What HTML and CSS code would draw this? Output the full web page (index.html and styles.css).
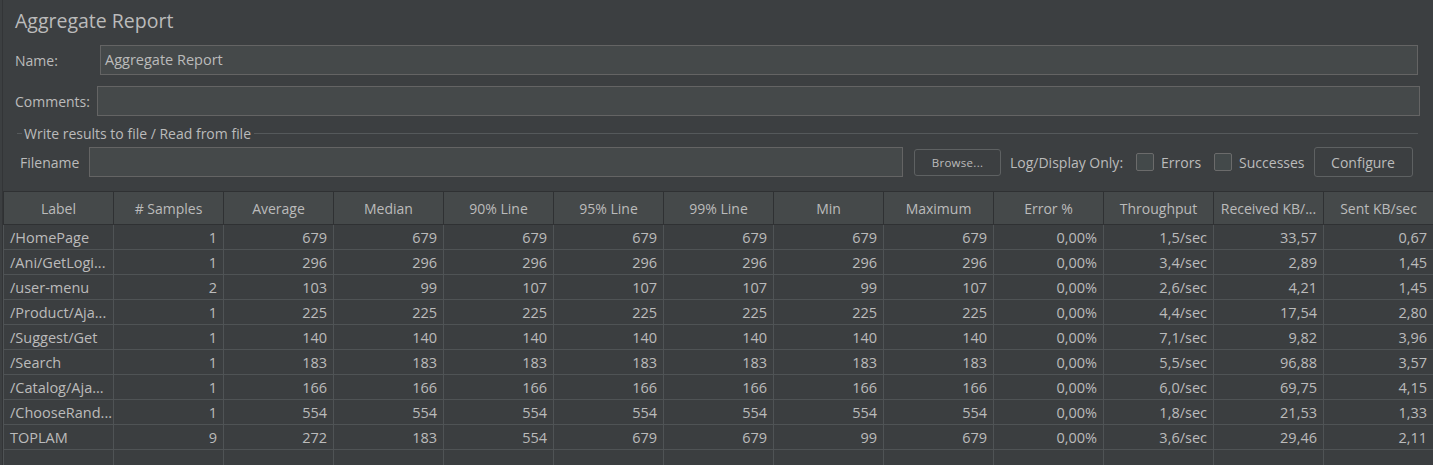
FILE: index.html
```html
<!DOCTYPE html>
<html>
<head>
<meta charset="utf-8">
<link rel="stylesheet" href="styles.css">
</head>
<body>
<div class="panel">
  <div class="form">
    <div class="title">Aggregate Report</div>
    <div class="row name-row">
      <span class="lbl">Name:</span>
      <div class="field name-field">Aggregate Report</div>
    </div>
    <div class="row comments-row">
      <span class="lbl">Comments:</span>
      <div class="field comments-field"></div>
    </div>
    <div class="group-head">
      <span class="dash"></span>
      <span class="group-title">Write results to file / Read from file</span>
      <span class="rule"></span>
    </div>
    <div class="file-row">
      <span class="lbl">Filename</span>
      <div class="field file-field"></div>
      <button class="btn browse">Browse...</button>
      <span class="lbl log">Log/Display Only:</span>
      <span class="check"></span><span class="lbl chk-lbl">Errors</span>
      <span class="check"></span><span class="lbl chk-lbl">Successes</span>
      <button class="btn configure">Configure</button>
    </div>
  </div>
  <table class="grid">
    <thead>
      <tr>
        <th>Label</th><th># Samples</th><th>Average</th><th>Median</th><th>90% Line</th><th>95% Line</th><th>99% Line</th><th>Min</th><th>Maximum</th><th>Error %</th><th>Throughput</th><th>Received KB/...</th><th>Sent KB/sec</th>
      </tr>
    </thead>
    <tbody>
      <tr><td class="l">/HomePage</td><td>1</td><td>679</td><td>679</td><td>679</td><td>679</td><td>679</td><td>679</td><td>679</td><td>0,00%</td><td>1,5/sec</td><td>33,57</td><td>0,67</td></tr>
      <tr><td class="l">/Ani/GetLogi...</td><td>1</td><td>296</td><td>296</td><td>296</td><td>296</td><td>296</td><td>296</td><td>296</td><td>0,00%</td><td>3,4/sec</td><td>2,89</td><td>1,45</td></tr>
      <tr><td class="l">/user-menu</td><td>2</td><td>103</td><td>99</td><td>107</td><td>107</td><td>107</td><td>99</td><td>107</td><td>0,00%</td><td>2,6/sec</td><td>4,21</td><td>1,45</td></tr>
      <tr><td class="l">/Product/Aja...</td><td>1</td><td>225</td><td>225</td><td>225</td><td>225</td><td>225</td><td>225</td><td>225</td><td>0,00%</td><td>4,4/sec</td><td>17,54</td><td>2,80</td></tr>
      <tr><td class="l">/Suggest/Get</td><td>1</td><td>140</td><td>140</td><td>140</td><td>140</td><td>140</td><td>140</td><td>140</td><td>0,00%</td><td>7,1/sec</td><td>9,82</td><td>3,96</td></tr>
      <tr><td class="l">/Search</td><td>1</td><td>183</td><td>183</td><td>183</td><td>183</td><td>183</td><td>183</td><td>183</td><td>0,00%</td><td>5,5/sec</td><td>96,88</td><td>3,57</td></tr>
      <tr><td class="l">/Catalog/Aja...</td><td>1</td><td>166</td><td>166</td><td>166</td><td>166</td><td>166</td><td>166</td><td>166</td><td>0,00%</td><td>6,0/sec</td><td>69,75</td><td>4,15</td></tr>
      <tr><td class="l">/ChooseRand...</td><td>1</td><td>554</td><td>554</td><td>554</td><td>554</td><td>554</td><td>554</td><td>554</td><td>0,00%</td><td>1,8/sec</td><td>21,53</td><td>1,33</td></tr>
      <tr><td class="l">TOPLAM</td><td>9</td><td>272</td><td>183</td><td>554</td><td>679</td><td>679</td><td>99</td><td>679</td><td>0,00%</td><td>3,6/sec</td><td>29,46</td><td>2,11</td></tr>
      <tr class="empty"><td></td><td></td><td></td><td></td><td></td><td></td><td></td><td></td><td></td><td></td><td></td><td></td><td></td></tr>
    </tbody>
  </table>
</div>
</body>
</html>
```

FILE: styles.css
```css
html, body {
  margin: 0;
  padding: 0;
  background: #3c3f41;
  height: 100%;
  overflow: hidden;
}
body {
  font-family: "Open Sans", "Noto Sans", sans-serif;
  color: #bbbbbb;
  font-size: 14px;
}
.panel {
  margin-left: 2px;
  border-left: 1px solid #333537;
  height: 100%;
}
.form {
  padding: 0 13px 0 0;
}
.title {
  font-size: 19.5px;
  line-height: 26px;
  padding-top: 8px;
  padding-left: 12px;
  height: 37px;
}
.row {
  display: flex;
  align-items: center;
}
.lbl {
  white-space: nowrap;
}
.name-row {
  padding-left: 12px;
  height: 30px;
}
.name-row .lbl { width: 85px; }
.comments-row {
  margin-top: 11px;
  padding-left: 12px;
  height: 30px;
}
.comments-row .lbl { width: 82px; }
.field {
  box-sizing: border-box;
  height: 30px;
  background: #45494a;
  border: 1px solid #646464;
  padding: 0 4px;
  line-height: 28px;
  font-size: 14.5px;
}
.name-field { width: 1318px; }
.comments-field { width: 1323px; }
.group-head {
  display: flex;
  align-items: center;
  height: 20px;
  margin-top: 7px;
  padding-left: 14px;
}
.dash {
  width: 5px;
  border-top: 1px solid #55595b;
}
.group-title {
  padding: 0 3px 0 2px;
  font-size: 14px;
}
.rule {
  flex: 1;
  border-top: 1px solid #55595b;
  margin-right: 2px;
}
.file-row {
  display: flex;
  align-items: center;
  height: 30px;
  margin-top: 4px;
  padding-left: 17px;
}
.file-row .lbl:first-child { width: 69px; }
.file-field { width: 814px; }
.btn {
  box-sizing: border-box;
  font-family: inherit;
  color: #bbbbbb;
  background: #3c3f41;
  border: 1px solid #5e6162;
  border-radius: 3px;
  padding: 0;
}
.browse {
  margin-left: 11px;
  width: 87px;
  height: 27px;
  font-size: 11.5px;
  letter-spacing: 0.3px;
}
.log { margin-left: 9px; }
.check {
  box-sizing: border-box;
  width: 18px;
  height: 18px;
  border: 1px solid #6b6b6b;
  border-radius: 2px;
  background: #43494a;
  margin-left: 13px;
  margin-right: 7px;
}
.configure {
  margin-left: 9px;
  width: 99px;
  height: 30px;
  font-size: 14px;
}
.grid {
  margin-top: 14px;
  border-collapse: collapse;
  table-layout: fixed;
  width: 1431px;
  margin-left: 0;
}
.grid th {
  box-sizing: border-box;
  height: 33px;
  background: #45494a;
  border: 1px solid #2f3133;
  font-weight: normal;
  font-size: 14px;
  padding: 0;
  white-space: nowrap;
  overflow: hidden;
  color: #bbbbbb;
}
.grid td {
  height: 24px;
  border: 1px solid #4f5355;
  padding: 0 6px;
  text-align: right;
  white-space: nowrap;
  overflow: hidden;
  font-size: 14.5px;
  background: #3b3e40;
}
.grid td.l { text-align: left; }
```
